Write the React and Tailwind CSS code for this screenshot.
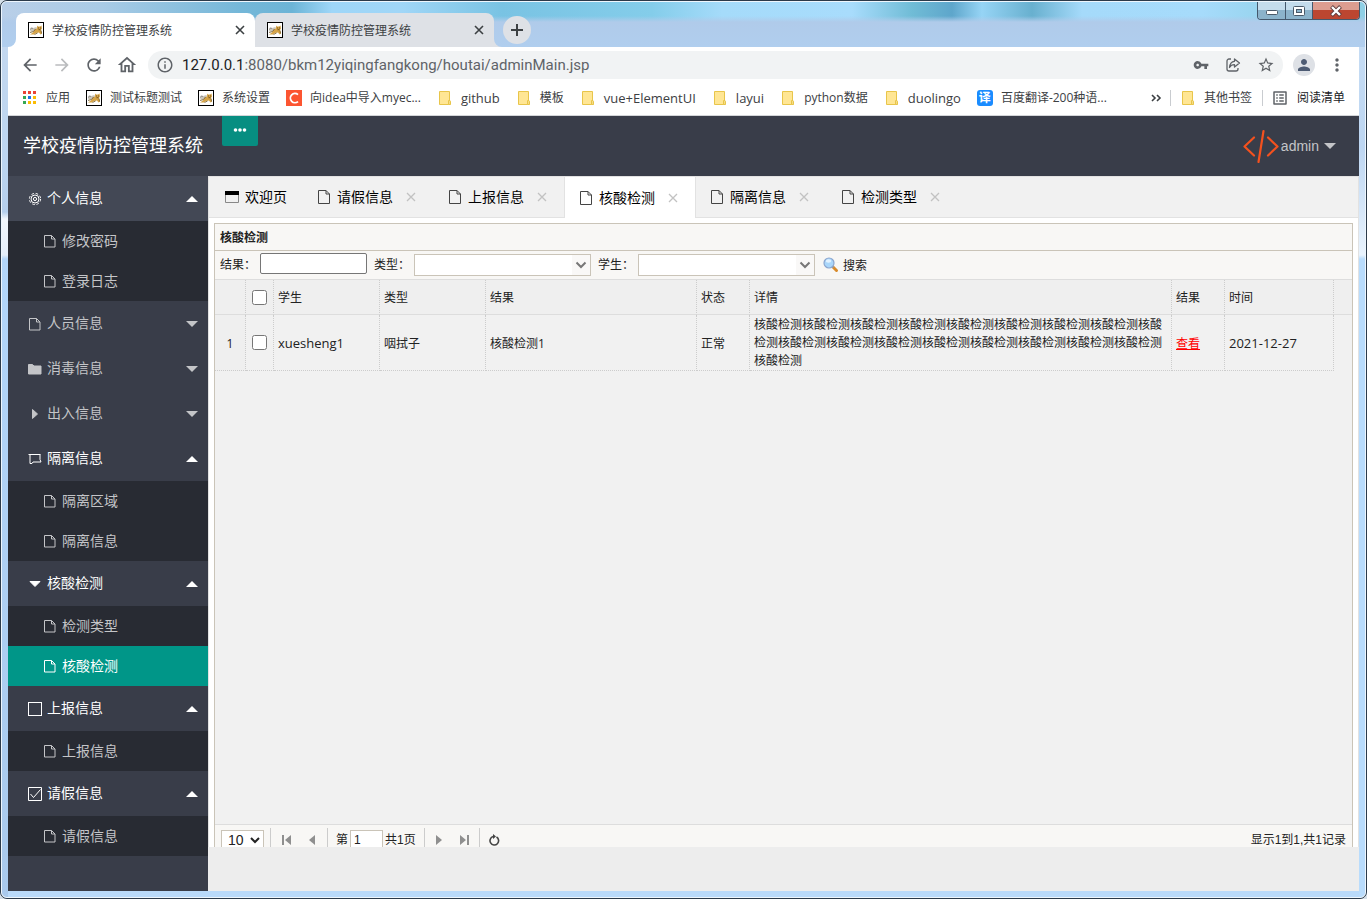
import { MdArrowBack, MdArrowForward, MdRefresh, MdOutlineHome, MdInfoOutline, MdVpnKey, MdStarBorder, MdPerson, MdMoreVert, MdListAlt } from 'react-icons/md';

const MENU = [
  { title: '个人信息', icon: 'gear', open: true, hover: true, children: ['修改密码', '登录日志'] },
  { title: '人员信息', icon: 'file', open: false, children: [] },
  { title: '消毒信息', icon: 'folder', open: false, children: [] },
  { title: '出入信息', icon: 'right', open: false, children: [] },
  { title: '隔离信息', icon: 'board', open: true, children: ['隔离区域', '隔离信息'] },
  { title: '核酸检测', icon: 'down', open: true, children: ['检测类型', '核酸检测'], active: '核酸检测' },
  { title: '上报信息', icon: 'box', open: true, children: ['上报信息'] },
  { title: '请假信息', icon: 'checked', open: true, children: ['请假信息'] },
];

const TABS = ['请假信息', '上报信息', '核酸检测', '隔离信息', '检测类型'];
const ACTIVE_TAB = '核酸检测';

const BOOKMARKS = [
  { label: '应用', icon: 'apps' },
  { label: '测试标题测试', icon: 'cat' },
  { label: '系统设置', icon: 'cat' },
  { label: '向idea中导入myec...', icon: 'c' },
  { label: 'github', icon: 'folder', latin: true },
  { label: '模板', icon: 'folder' },
  { label: 'vue+ElementUI', icon: 'folder', latin: true },
  { label: 'layui', icon: 'folder', latin: true },
  { label: 'python数据', icon: 'folder' },
  { label: 'duolingo', icon: 'folder', latin: true },
  { label: '百度翻译-200种语...', icon: 'yi' },
];

const ROWS = [
  {
    id: 1,
    student: 'xuesheng1',
    type: '咽拭子',
    result: '核酸检测1',
    status: '正常',
    detail: '核酸检测'.repeat(18),
    date: '2021-12-27',
  },
];

const CatIcon = () => (
  <svg className="w-4 h-4 shrink-0" viewBox="0 0 16 16">
    <rect x="0.5" y="0.5" width="15" height="15" fill="#fff" stroke="#000" />
    <path d="M2 7.500C2 5 4 5 5 6L8.500 5L9 7.500L5 9.500L2.500 9.500z" fill="#c9c5bb" />
    <path d="M9 3.500L10 4.500L12 4.500L13.500 3.500L14 6.500L13 8L14 11.500L12.500 12.500L11 10.500L8 11L6 12.500L2 12.500L5 10.500L7 7.500L9 6.500z" fill="#d6a447" />
    <path d="M2 10.500L5.500 9.500L7.500 7M6.500 12.500L9.500 11M13 8.500L13.500 11.500" stroke="#6e5526" strokeWidth="0.8" fill="none" />
    <path d="M10 6h1M12 6h1M10.500 7.700h2" stroke="#5c3d10" strokeWidth="0.8" />
    <path d="M2.500 7.500l1-1.500 1.500 .5" stroke="#777" strokeWidth="0.7" fill="none" />
  </svg>
);

const FolderIcon = () => (
  <svg className="w-4 h-4 shrink-0" viewBox="0 0 16 16">
    <path d="M2.5 1.5h10v10h1v3h-11z" fill="#ffe694" stroke="#e8c54a" />
    <path d="M11.5 14.5v-4h1.5v4z" fill="#fff3c4" stroke="#e8c54a" />
  </svg>
);

const APP_DOTS = ['#ea4335', '#ea4335', '#ea4335', '#34a853', '#1a73e8', '#fbbc04', '#34a853', '#fbbc04', '#fbbc04'];

const BookmarkIcon = ({ name }) => {
  if (name === 'cat') return <CatIcon />;
  if (name === 'folder') return <FolderIcon />;
  if (name === 'c') {
    return (
      <svg className="w-4 h-4 shrink-0" viewBox="0 0 16 16">
        <rect width="16" height="16" fill="#fc5531" />
        <path d="M12 4.6 A4.6 4.6 0 1 0 12 11.6" fill="none" stroke="#fff" strokeWidth="1.8" />
      </svg>
    );
  }
  if (name === 'yi') {
    return (
      <span className="w-4 h-4 shrink-0 rounded-[3px] bg-[#1a8cff] text-white text-xs leading-4 text-center font-bold">译</span>
    );
  }
  return (
    <svg className="w-4 h-4 shrink-0" viewBox="0 0 16 16">
      {APP_DOTS.map((color, i) => (
        <rect key={i} x={1 + (i % 3) * 5} y={1 + Math.floor(i / 3) * 5} width="3" height="3" fill={color} />
      ))}
    </svg>
  );
};

const MenuIcon = ({ name }) => {
  const shapes = {
    file: <path d="M1.5 1.5h7l3.500 3.500v8h-10.500zM8.5 1.5v3.500h3.500" />,
    page: <path d="M1.500.5h7.500l3.500 3.500v9.500h-11zM9 .5v3.500h3.500" />,
    folder: <path d="M.5 2.5h4l1.5 1.5h7v8h-12.5z" fill="currentColor" />,
    right: <path d="M4.5 2.5v9l5-4.5z" fill="currentColor" />,
    down: <path d="M2 4.5h10L7 9.5z" fill="currentColor" />,
    board: <path d="M.5 2.500h12M2 2.500v9h2l1-1.500h8l-1-2.500v-5" />,
    box: <rect x="0.5" y="0.5" width="13" height="13" />,
    checked: <path d="M.5.5h13v13h-13zM2.500 7l3 3.500l7-8" />,
    gear: (
      <>
        <circle cx="7" cy="7" r="4" />
        <circle cx="7" cy="7" r="1.6" />
        <circle cx="7" cy="7" r="5.6" strokeDasharray="2.6 1.8" />
      </>
    ),
  };
  return (
    <svg className="w-3.5 h-3.5 shrink-0" viewBox="0 0 14 14" fill="none" stroke="currentColor" strokeWidth="1">
      {shapes[name]}
    </svg>
  );
};

const Cross = ({ className }) => (
  <svg className={className} viewBox="0 0 10 10" fill="none" stroke="currentColor">
    <path d="M1 1l8 8M9 1l-8 8" />
  </svg>
);

const BrowserTab = ({ active }) => (
  <div
    className={`relative flex items-center w-[239px] h-[34px] pl-3 pr-2.5 gap-2 rounded-t-lg ${
      active ? 'bg-white' : 'bg-[#dee1e6]'
    }`}
  >
    {active && (
      <svg className="absolute -left-2 bottom-0 w-2 h-2" viewBox="0 0 8 8" fill="#fff">
        <path d="M8 0v8H0a8 8 0 0 0 8-8z" />
      </svg>
    )}
    {!active && (
      <svg className="absolute -right-2 bottom-0 w-2 h-2" viewBox="0 0 8 8" fill="#dee1e6">
        <path d="M0 0v8h8a8 8 0 0 1-8-8z" />
      </svg>
    )}
    <CatIcon />
    <span className="flex-1 pt-0.5 text-xs text-[#3c4043]">学校疫情防控管理系统</span>
    <button type="button" aria-label="关闭标签页" className="text-[#3c4043]">
      <Cross className="w-2.5 h-2.5 stroke-[1.6]" />
    </button>
  </div>
);

const TitleBar = () => (
  <div className="flex items-start h-[45px] pl-3.5 bg-[linear-gradient(to_bottom,transparent_14px,#b0cbea_20px,#b0ceee_100%),linear-gradient(to_right,#b9cfe8_0,#a9cbe6_100px,#74b7d8_240px,#6cb4d6_290px,#9ed6f8_330px,#a0d6f7_400px,#79c3e3_500px,#84cdea_650px,#a5dbfa_720px,#a8dcfc_850px,#70bcd6_910px,#5ea6cb_950px,#96d4f5_980px,#68b0cf_1030px,#a5dafa_1080px,#a6dbfb_1200px,#8fd0e6_1300px)]">
    <div className="flex items-end h-full">
      <BrowserTab active />
      <BrowserTab />
      <button
        type="button"
        aria-label="新标签页"
        className="flex items-center justify-center w-7 h-7 ml-[9px] mb-[3px] rounded-full bg-[#dee1e6] text-[#3c4043]"
      >
        <svg className="w-3 h-3" viewBox="0 0 12 12" stroke="currentColor" strokeWidth="2">
          <path d="M6 0v12M0 6h12" />
        </svg>
      </button>
    </div>
    <div className="flex h-[18px] ml-auto mr-[5px] rounded-b border border-t-0 border-[#44586c] overflow-hidden">
      <button type="button" aria-label="最小化" className="flex items-center justify-center w-7 border-r border-[#44586c] bg-linear-to-b from-[#c4dcec] from-45% to-[#8bb3cb] to-50%">
        <svg className="w-3 h-3" viewBox="0 0 12 12">
          <rect x="0.5" y="5.5" width="11" height="4" rx="1" fill="#fff" stroke="#4b5a69" />
        </svg>
      </button>
      <button type="button" aria-label="最大化" className="flex items-center justify-center w-[27px] border-r border-[#44586c] bg-linear-to-b from-[#c4dcec] from-45% to-[#8bb3cb] to-50%">
        <svg className="w-3 h-3" viewBox="0 0 12 12">
          <rect x="0.5" y="1.5" width="11" height="9" rx="1" fill="#fff" stroke="#4b5a69" />
          <rect x="3.5" y="4.5" width="5" height="3" fill="#8bb3cb" stroke="#4b5a69" />
        </svg>
      </button>
      <button type="button" aria-label="关闭" className="flex items-center justify-center w-[46px] bg-linear-to-b from-[#dc9d90] from-45% to-[#bc4630] to-50%">
        <svg className="w-3 h-3" viewBox="0 0 12 12">
          <path d="M1.5 1.5l9 9M10.5 1.5l-9 9" stroke="#5b3a3a" strokeWidth="4" />
          <path d="M2 2l8 8M10 2l-8 8" stroke="#fff" strokeWidth="2.4" />
        </svg>
      </button>
    </div>
  </div>
);

const Toolbar = () => (
  <div className="flex items-center h-9 px-3 bg-white text-[#5f6368]">
    <div className="flex items-center gap-3 mr-2.5">
      <button type="button" aria-label="后退"><MdArrowBack className="w-5 h-5" /></button>
      <button type="button" aria-label="前进" className="text-[#babcbe]"><MdArrowForward className="w-5 h-5" /></button>
      <button type="button" aria-label="刷新"><MdRefresh className="w-5 h-5" /></button>
      <button type="button" aria-label="主页"><MdOutlineHome className="w-[22px] h-[22px]" /></button>
    </div>
    <div className="flex flex-1 items-center h-7 px-2 rounded-full bg-[#f1f3f4]">
      <MdInfoOutline className="w-[18px] h-[18px]" />
      <span className="flex-1 pl-2 font-[Roboto] text-[15px] leading-5">
        <span className="text-[#202124]">127.0.0.1</span>:8080/bkm12yiqingfangkong/houtai/adminMain.jsp
      </span>
      <div className="flex items-center gap-4">
        <MdVpnKey className="w-4 h-4" />
        <svg className="w-4 h-4" viewBox="0 0 16 16" fill="none" stroke="currentColor" strokeWidth="1.3">
          <path d="M6 2H4a2 2 0 0 0-2 2v8a2 2 0 0 0 2 2h7a2 2 0 0 0 2-2v-1" />
          <path d="M9.5 2l5 4-5 4V7.7C7 7.700 5.600 8.500 4.500 10.500C4.800 7 6.500 4.600 9.500 4.300z" strokeLinejoin="round" />
        </svg>
        <MdStarBorder className="w-[18px] h-[18px]" />
      </div>
    </div>
    <div className="flex items-center gap-3 ml-2.5">
      <span className="flex items-center justify-center w-[22px] h-[22px] rounded-full bg-[#dee1e6]">
        <MdPerson className="w-[18px] h-[18px] text-[#4d5b73]" />
      </span>
      <button type="button" aria-label="更多"><MdMoreVert className="w-5 h-5" /></button>
    </div>
  </div>
);

const BookmarkBar = () => (
  <nav className="flex items-center h-[33px] px-3.5 pb-0.5 bg-white border-b border-[#d3d5d8] text-xs text-[#3c4043] whitespace-nowrap">
    <div className="flex items-center gap-4">
      {BOOKMARKS.map((b) => (
        <a key={b.label} href="#" className="flex items-center gap-2">
          <BookmarkIcon name={b.icon} />
          <span className={b.latin ? 'text-[13px] leading-4' : 'leading-4'}>{b.label}</span>
        </a>
      ))}
    </div>
    <div className="flex items-center ml-auto">
      <button type="button" aria-label="更多书签" className="mr-2">
        <svg className="w-3 h-3" viewBox="0 0 12 12" fill="none" stroke="currentColor" strokeWidth="1.6">
          <path d="M2 3l3 3-3 3M7 3l3 3-3 3" />
        </svg>
      </button>
      <a href="#" className="flex items-center gap-2 pl-[9px] pr-2.5 border-x border-[#c9ccd0]">
        <FolderIcon />
        <span className="leading-4">其他书签</span>
      </a>
      <a href="#" className="flex items-center gap-2 pl-2 text-[#202124]">
        <MdListAlt className="w-[18px] h-[18px] text-[#5f6368]" />
        <span className="leading-4">阅读清单</span>
      </a>
    </div>
  </nav>
);

const AppHeader = () => (
  <header className="flex items-start h-[60px] pl-[15px] pr-[23px] bg-[#393d49]">
    <h1 className="w-[199px] text-lg leading-[58px] text-white">学校疫情防控管理系统</h1>
    <button type="button" aria-label="展开菜单" className="flex justify-center pt-[7px] w-9 h-[30px] rounded-b-xs bg-[#078e81]">
      <svg className="w-3.5 h-3.5" viewBox="0 0 14 14" fill="#fff">
        <circle cx="2.500" cy="7" r="1.800" />
        <circle cx="7" cy="7" r="1.800" />
        <circle cx="11.500" cy="7" r="1.800" />
      </svg>
    </button>
    <a href="#" className="flex items-center h-full ml-auto font-['Liberation_Sans'] text-sm text-[#c4c5c8]">
      <svg className="w-9 h-9" viewBox="0 0 36 36" fill="none" stroke="#f4511e" strokeWidth="2.2" strokeLinecap="round" strokeLinejoin="round">
        <path d="M11 9.500L1.500 18.500l9.500 9M25 9.500l9.500 9l-9.500 9M20.500 3l-5 31" />
      </svg>
      <span className="ml-0.5">admin</span>
      <svg className="w-3 h-1.5 ml-[5px]" viewBox="0 0 12 6" fill="currentColor">
        <path d="M0 0h12L6 6z" />
      </svg>
    </a>
  </header>
);

const Sidebar = () => (
  <aside className="w-[200px] shrink-0 bg-[#393d49] text-sm text-[#c4c5c8]">
    {MENU.map((group) => (
      <div key={group.title}>
        <a
          href="#"
          className={`flex items-center h-[45px] pl-5 pr-2.5 gap-[5px] ${group.hover ? 'bg-[#434855]' : ''} ${
            group.open ? 'text-white' : ''
          }`}
        >
          <MenuIcon name={group.icon} />
          <span className="flex-1 pb-0.5">{group.title}</span>
          <svg className="w-3 h-1.5" viewBox="0 0 12 6" fill="currentColor">
            <path d={group.open ? 'M0 6h12L6 0z' : 'M0 0h12L6 6z'} />
          </svg>
        </a>
        {group.children.map((child) => (
          <a
            key={child}
            href="#"
            className={`flex items-center h-10 pl-[35px] gap-[5px] ${
              child === group.active ? 'bg-[#009688] text-white' : 'bg-[#282b33]'
            }`}
          >
            <MenuIcon name="file" />
            {child}
          </a>
        ))}
      </div>
    ))}
  </aside>
);

const PageTabs = () => (
  <div className="flex h-[42px] border-y border-[#e2e2e2] bg-[#f1f1f1] text-sm text-black">
    <a href="#" className="flex items-center gap-1.5 px-4 w-[93px] whitespace-nowrap">
      <svg className="w-3.5 h-3.5 shrink-0" viewBox="0 0 14 14">
        <path d="M.5 4v8.500h13v-8.500" fill="none" stroke="#888" />
        <rect width="14" height="4" y="1" />
      </svg>
      欢迎页
    </a>
    {TABS.map((tab) => (
      <div
        key={tab}
        className={`flex items-center gap-1.5 ${
          tab === ACTIVE_TAB ? 'w-[132px] -mr-px -mb-px bg-white border-x border-[#e2e2e2] pl-3.5' : 'w-[131px] pl-[15px]'
        }`}
      >
        <span className="text-[#444]">
          <MenuIcon name="page" />
        </span>
        <a href="#">{tab}</a>
        <button type="button" aria-label="关闭" className="ml-[7px] text-[#c2c2c2]">
          <Cross className="w-2.5 h-2.5 stroke-[1.3]" />
        </button>
      </div>
    ))}
  </div>
);

const Combo = ({ id, label }) => (
  <>
    <label htmlFor={id} className="ml-[7px]">{label}</label>
    <div className="relative w-[177px] h-[22px] ml-1">
      <select id={id} className="block w-full h-full appearance-none border border-[#cac4b8] bg-white px-1">
        <option value="" />
      </select>
      <span className="absolute right-px top-px bottom-px flex items-center justify-center w-[18px] bg-[#f9f8f7] pointer-events-none">
        <svg className="w-3 h-3" viewBox="0 0 12 12" fill="none" stroke="#777" strokeWidth="2">
          <path d="M1.500 3.500l4.500 4.500l4.500-4.500" />
        </svg>
      </span>
    </div>
  </>
);

const SearchIcon = () => (
  <svg className="w-4 h-4" viewBox="0 0 16 16">
    <path d="M9.500 9.500l4 4" stroke="#d98b2b" strokeWidth="3" strokeLinecap="round" />
    <path d="M9 9l1.500 1.500" stroke="#9a9a9a" strokeWidth="2" />
    <circle cx="6" cy="6" r="5" fill="#a9d6fa" stroke="#8ba6cf" strokeWidth="1.200" />
    <ellipse cx="5.500" cy="4" rx="2.800" ry="1.800" fill="#e2f2ff" />
  </svg>
);

const SearchForm = () => (
  <form className="flex items-center h-[29px] pl-[5px] bg-[#f8f7f5] border-b border-[#ddd]" onSubmit={(e) => e.preventDefault()}>
    <label htmlFor="result">结果：</label>
    <input id="result" type="text" className="w-[107px] h-[21px] ml-1 mb-1 px-1 rounded-xs border border-[#767676] bg-white" />
    <Combo id="type" label="类型：" />
    <Combo id="student" label="学生：" />
    <button type="submit" className="flex items-center gap-1 ml-2">
      <SearchIcon />
      <span className="pt-0.5">搜索</span>
    </button>
  </form>
);

const dotted = 'border-r border-dotted border-[#ccc]';

const DataTable = () => (
  <table className="w-full table-fixed border-separate border-spacing-0 text-left">
    <colgroup>
      <col className="w-[31px]" />
      <col className="w-7" />
      <col className="w-[106px]" />
      <col className="w-[106px]" />
      <col className="w-[211px]" />
      <col className="w-[53px]" />
      <col />
      <col className="w-[53px]" />
      <col className="w-[109px]" />
      <col className="w-[18px]" />
    </colgroup>
    <thead className="bg-[#efefef]">
      <tr className="h-[35px] [&>th]:border-b [&>th]:border-b-[#ddd] [&>th]:[border-bottom-style:solid] [&>th]:font-normal">
        <th className={dotted} />
        <th className={dotted}>
          <input type="checkbox" aria-label="全选" className="block w-[15px] h-[15px] mx-auto" />
        </th>
        {['学生', '类型', '结果', '状态', '详情', '结果', '时间'].map((h, i) => (
          <th key={i} className={`pl-1 pt-0.5 ${dotted}`}>{h}</th>
        ))}
        <th />
      </tr>
    </thead>
    <tbody>
      {ROWS.map((row) => (
        <tr key={row.id} className="h-[55px] leading-[18px] [&>td]:border-dotted [&>td]:border-[#ccc] [&>td:not(:last-child)]:border-r [&>td:not(:last-child)]:border-b">
          <td className="text-center pt-0.5 bg-[#efefef]">{row.id}</td>
          <td>
            <input type="checkbox" aria-label={row.student} className="block w-[15px] h-[15px] mx-auto" />
          </td>
          <td className="pl-1 text-[13px]">{row.student}</td>
          <td className="pl-1 pt-0.5">{row.type}</td>
          <td className="pl-1 pt-0.5">{row.result}</td>
          <td className="pl-1 pt-0.5">{row.status}</td>
          <td className="px-1 pt-px">{row.detail}</td>
          <td className="pl-1 pt-0.5"><a href="#" className="text-[#f00] underline">查看</a></td>
          <td className="pl-1 text-[13px]">{row.date}</td>
          <td />
        </tr>
      ))}
    </tbody>
  </table>
);

const Divider = () => <span className="w-px h-6 bg-[#ccc]" />;

const PagerIcon = ({ d, label }) => (
  <button type="button" aria-label={label} className="flex items-center justify-center w-[26px] h-6 text-[#8f8f8f]">
    <svg className="w-3 h-3" viewBox="0 0 12 12" fill="currentColor">
      <path d={d} />
    </svg>
  </button>
);

const Pager = () => (
  <div className="h-[23px] border-t border-[#ddd] bg-[#f8f7f5] overflow-hidden font-['Liberation_Sans','Noto_Sans_CJK_SC',sans-serif]">
    <div className="flex items-center h-[30px] px-1.5">
      <select aria-label="每页条数" defaultValue="10" className="w-[43px] h-5 mr-1.5 pl-0.5 border border-[#cac4b8] bg-white text-sm leading-4">
        <option>10</option>
        <option>20</option>
      </select>
      <Divider />
      <div className="flex mx-0.5">
        <PagerIcon label="首页" d="M2 1h2v10h-2zM11 1v10l-6-5z" />
        <PagerIcon label="上一页" d="M9 1v10l-6-5z" />
      </div>
      <Divider />
      <label htmlFor="page" className="ml-2">第</label>
      <input id="page" type="text" defaultValue="1" className="w-[33px] h-5 mx-0.5 px-[3px] border border-[#cac4b8] bg-white" />
      <span className="mr-2">共1页</span>
      <Divider />
      <div className="flex mx-px">
        <PagerIcon label="下一页" d="M3 1v10l6-5z" />
        <PagerIcon label="尾页" d="M1 1v10l6-5zM8 1h2v10h-2z" />
      </div>
      <Divider />
      <button type="button" aria-label="刷新" className="flex items-center justify-center w-7 h-6 text-[#444]">
        <svg className="w-3 h-3" viewBox="0 0 12 12" fill="none" stroke="currentColor" strokeWidth="1.600">
          <path d="M8.500 3A4.300 4.300 0 1 1 5 2.600" />
          <path d="M5 0v5l3-2.500z" fill="currentColor" stroke="none" />
        </svg>
      </button>
      <span className="ml-auto">显示1到1,共1记录</span>
    </div>
  </div>
);

const App = () => (
  <div className="h-screen bg-[#d5dfe8] font-['Open_Sans','Noto_Sans_CJK_SC',sans-serif]">
    <div className="h-full rounded-[7px] border border-[#2b3a4a] overflow-hidden">
      <div className="flex flex-col h-full rounded-md border border-[#eef6fd] bg-[#b9dafa] overflow-hidden">
        <TitleBar />
        <div className="flex flex-1 min-h-0">
          <div className="w-1.5 shrink-0 bg-[linear-gradient(to_bottom,#c3d8f0_0,#bcd5f0_120px,#b5cfec_165px,#f2f7fc_172px,#e4eefa_208px,#b3d6fa_212px,#a9c9ec_100%)]" />
          <div className="flex flex-col flex-1 min-w-0 mb-1.5">
            <Toolbar />
            <BookmarkBar />
            <AppHeader />
            <div className="flex flex-1 min-h-0">
              <Sidebar />
              <main className="flex flex-col flex-1 min-w-0 bg-white">
                <div className="flex flex-col flex-1 min-h-0 border-x border-[#e2e2e2]">
                  <PageTabs />
                  <section className="flex flex-col flex-1 min-h-0 mt-[5px] mx-[5px] border border-b-0 border-[#cac4b8] bg-[#f1f1f1] text-xs text-[#222]">
                    <h2 className="h-[27px] pl-[5px] leading-[28px] font-bold bg-[#f8f7f5] border-b border-[#cac4b8]">核酸检测</h2>
                    <SearchForm />
                    <div className="flex-1">
                      <DataTable />
                    </div>
                    <Pager />
                  </section>
                </div>
                <footer className="h-11 bg-[#ededed]" />
              </main>
            </div>
          </div>
          <div className="w-1.5 shrink-0 bg-[linear-gradient(to_bottom,#c5dcf4_0,#bdd6f2_100px,#e9f3fd_208px,#b9dcfc_212px,#b9dcfc_100%)]" />
        </div>
      </div>
    </div>
  </div>
);

export default App;
